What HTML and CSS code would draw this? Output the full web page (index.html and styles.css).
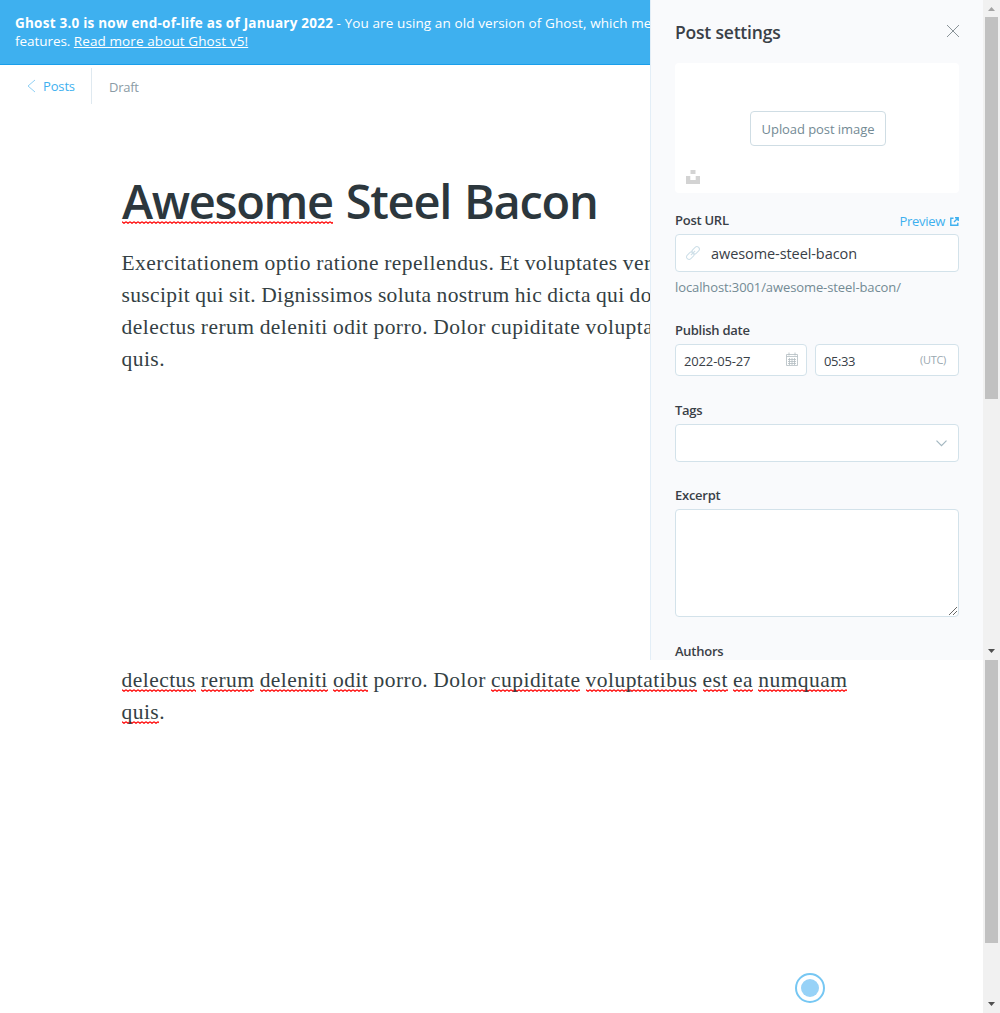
FILE: index.html
```html
<!DOCTYPE html>
<html lang="en">
<head>
<meta charset="utf-8">
<title>Post editor</title>
<link rel="stylesheet" href="styles.css">
</head>
<body>
<section class="frame frame-top">
  <main class="editor">
    <div class="banner"><b>Ghost 3.0 is now end-of-life as of January 2022</b> <span class="notice">- You are using an old version of Ghost, which mea</span><br>features. <a class="banner-link">Read more about Ghost v5!</a></div>
    <nav class="toolbar">
      <a class="back"><svg width="9" height="14" viewBox="0 0 9 14"><path d="M8 1L1 7l7 6"/></svg>Posts</a>
      <span class="status">Draft</span>
    </nav>
    <h1 class="title"><span class="misspelt">Awesome</span> Steel Bacon</h1>
    <p class="content">Exercitationem optio ratione repellendus. Et voluptates ver<br><span class="tight">suscipit qui sit. Dignissimos soluta nostrum hic dicta qui do</span><br>delectus rerum deleniti odit porro. Dolor cupiditate volupta<br>quis.</p>
  </main>
  <aside class="settings">
    <header class="settings-head">
      <h2>Post settings</h2>
      <svg class="close" width="14" height="14" viewBox="0 0 14 14"><path d="M1 1l12 12M13 1L1 13"/></svg>
    </header>
    <div class="uploader">
      <button class="upload">Upload post image</button>
      <svg class="unsplash" width="14" height="14" viewBox="0 0 14 14"><path d="M4.5 0h5v4h-5zM0 6h4.3v4h5.4V6H14v8H0z"/></svg>
    </div>
    <div class="label-row url-label"><label>Post URL</label>
      <a class="preview">Preview <svg width="9" height="9" viewBox="0 0 9 9"><path d="M3.5 1.2H.8v7h7V5.8M5 .8h3.2V4M8 1L4 5"/></svg></a></div>
    <div class="field tall">
      <svg class="link" width="14" height="14" viewBox="0 0 14 14"><g transform="rotate(-45 7 7)"><rect x="-1" y="4.5" width="8.5" height="5" rx="2.5"/><rect x="6.5" y="4.5" width="8.5" height="5" rx="2.5"/><path d="M4 7h6"/></g></svg>
      <span class="slug">awesome-steel-bacon</span>
    </div>
    <p class="hint">localhost:3001/awesome-steel-bacon/</p>
    <label class="group-label">Publish date</label>
    <div class="date-row">
      <div class="field short"><span>2022-05-27</span>
        <svg class="calendar" width="12" height="14" viewBox="0 0 12 14"><path d="M.5 2.5h11v11H.5zM.5 4.5h11M2 7.5h8M2 9.5h8M2 11.5h8M3.5 6v7M6 6v7M8.5 6v7M3 .5v3M9 .5v3"/></svg></div>
      <div class="field short"><span class="time">05:33</span><span class="utc">(UTC)</span></div>
    </div>
    <label class="group-label">Tags</label>
    <div class="field tall select"><svg class="chevron" width="11" height="7" viewBox="0 0 11 7"><path d="M.5 .7l5 5 5-5"/></svg></div>
    <label class="group-label excerpt-label">Excerpt</label>
    <div class="field area"><svg class="grip" width="8" height="8" viewBox="0 0 8 8"><path d="M0 8L8 0M4 8l4-4"/></svg></div>
    <label class="group-label">Authors</label>
  </aside>
  <div class="scrollbar">
    <svg class="up" width="7" height="4" viewBox="0 0 7 4"><path d="M0 4L3.5 0 7 4z"/></svg>
    <div class="thumb"></div>
    <svg class="down" width="7" height="4" viewBox="0 0 7 4"><path d="M0 0h7L3.5 4z"/></svg>
  </div>
</section>
<section class="frame frame-bottom">
  <main class="editor">
    <p class="content rest"><span class="misspelt">delectus</span> <span class="misspelt">rerum</span> <span class="misspelt">deleniti</span> <span class="misspelt">odit</span> porro. Dolor <span class="misspelt">cupiditate</span> <span class="misspelt">voluptatibus</span> <span class="misspelt">est</span> <span class="misspelt">ea</span> <span class="misspelt">numquam</span><br><span class="misspelt">quis</span>.</p>
    <div class="beacon"></div>
  </main>
  <div class="scrollbar">
    <div class="thumb"></div>
    <svg class="down" width="7" height="4" viewBox="0 0 7 4"><path d="M0 0h7L3.5 4z"/></svg>
  </div>
</section>
</body>
</html>
```

FILE: styles.css
```css
* { box-sizing: border-box; }
body {
  margin: 0;
  height: 1013px;
  overflow: hidden;
  background: #fff;
  color: #394047;
  font: 13px/18px "Open Sans", "Noto Sans", sans-serif;
}
h1, h2, p { margin: 0; }
svg { display: block; flex: none; fill: none; }

.frame { display: flex; overflow: hidden; }
.frame-top { height: 660px; }
.frame-bottom { height: 353px; }
.editor { flex: 1; min-width: 0; overflow: hidden; position: relative; white-space: nowrap; }

.banner {
  height: 65px;
  padding: 14px 0 0 15px;
  background: #3eb0ef;
  border-bottom: 1px solid #1a9eea;
  color: #fff;
  font-size: 13.5px;
  letter-spacing: -.05px;
}
.banner b { letter-spacing: .23px; }
.notice { letter-spacing: .1px; }
.banner-link { letter-spacing: .1px; text-decoration: underline; text-underline-offset: 1px; }

.toolbar { display: flex; height: 39px; padding-top: 3px; }
.back {
  display: flex;
  align-items: center;
  gap: 7px;
  width: 92px;
  height: 36px;
  padding-left: 27px;
  border-right: 1px solid #dfe9f0;
  color: #3eb0ef;
  letter-spacing: -.15px;
}
.back svg { stroke: #8fd0f5; }
.status { padding: 10px 0 0 17px; color: #8b9ba5; letter-spacing: -.25px; }

.title {
  margin: 67px 0 0 122px;
  height: 61px;
  font-size: 47px;
  line-height: 60px;
  font-weight: 560;
  letter-spacing: -1.3px;
  word-spacing: 2px;
  color: #2c373d;
}
.misspelt {
  background: url("data:image/svg+xml,%3Csvg xmlns='http://www.w3.org/2000/svg' width='4' height='3'%3E%3Cpath d='M0 .7L2 2.3L4 .7' fill='none' stroke='%23f00' stroke-width='1.2'/%3E%3C/svg%3E") repeat-x left bottom;
}
.title .misspelt { background-position: left bottom 9px; }
.content {
  margin: 15px 0 0 121.5px;
  font: 21.5px/32px "Liberation Serif", serif;
  letter-spacing: .46px;
  word-spacing: -.65px;
  color: #343f44;
}
.tight { letter-spacing: .37px; }
.rest { margin-top: 4px; }
.beacon {
  position: absolute;
  left: 795px;
  top: 313px;
  width: 30px;
  height: 30px;
  border: 2px solid #76c7f3;
  border-radius: 50%;
  padding: 4px;
}
.beacon::before {
  content: "";
  display: block;
  height: 18px;
  border-radius: 50%;
  background: #97d2f7;
}

.settings {
  width: 333px;
  padding: 0 24px;
  border-left: 1px solid #e3eef7;
  background: #f9fafc;
  overflow: hidden;
}
.settings > * { width: 284px; }
.settings-head { display: flex; justify-content: space-between; height: 63px; padding-top: 20px; }
.settings-head h2 { font-size: 17.5px; line-height: 24px; font-weight: 580; letter-spacing: -.2px; }
.close { margin: 4px -1px 0 0; stroke: #7d878c; stroke-width: .9; }

.uploader {
  position: relative;
  display: flex;
  align-items: center;
  justify-content: center;
  height: 130px;
  border-radius: 4px;
  background: #fff;
}
.upload {
  width: 136px;
  height: 35px;
  margin: 0 0 0 2px;
  padding: 1px 0 0;
  border: 1px solid #cfdde4;
  border-radius: 4px;
  background: #fff;
  color: #738a94;
  font: inherit;
  letter-spacing: -.07px;
}
.unsplash { position: absolute; left: 11px; bottom: 9px; fill: #d3d3d3; }

label { display: block; font-weight: 600; letter-spacing: -.26px; }
.label-row { display: flex; justify-content: space-between; height: 18px; }
.url-label { margin: 18px 0 5px; }
.group-label { margin: 25px 0 5px; }
.excerpt-label { margin-top: 24px; }
.preview { display: flex; align-items: center; gap: 5px; margin-top: 1px; height: 18px; color: #3eb0ef; letter-spacing: -.3px; }
.preview svg { stroke: #3eb0ef; stroke-width: 1.4; }

.field {
  display: flex;
  align-items: center;
  border: 1px solid #d3e2ea;
  border-radius: 4px;
  background: #fff;
}
.tall { height: 38px; }
.short { height: 32px; padding: 2px 8px 0; justify-content: space-between; letter-spacing: -.15px; }
.time { letter-spacing: -.4px; }
.area { height: 108px; align-items: flex-end; justify-content: flex-end; padding: 1px; }
.select { justify-content: flex-end; padding-right: 11px; }
.link { margin-left: 10px; stroke: #cddfe8; overflow: visible; }
.slug { margin: 2px 0 0 11px; font-size: 14.5px; letter-spacing: -.08px; }
.hint { margin-top: 6px; color: #738a94; letter-spacing: -.1px; }
.date-row { display: grid; grid-template-columns: 132px 144px; gap: 8px; }
.calendar { margin-top: -4px; stroke: #b2bcc1; stroke-width: .8; }
.utc { margin: -3px 4px 0 0; font-size: 11px; letter-spacing: -.3px; color: #9aa8b0; }
.chevron { stroke: #a3b7c0; stroke-width: 1.2; }
.grip { stroke: #555; stroke-width: .9; }

.scrollbar { display: flex; flex-direction: column; width: 17px; padding: 0 2px; background: #f1f1f1; }
.scrollbar svg { align-self: center; }
.thumb { width: 13px; background: #c1c1c1; }
.up { margin: 7px 0 6px; fill: #a3a3a3; }
.down { margin: auto 0 7px; fill: #505050; }
.frame-top .thumb { height: 382px; }
.frame-bottom .thumb { height: 283px; }
```
